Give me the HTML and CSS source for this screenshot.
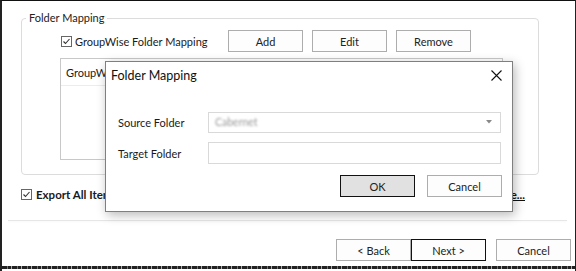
FILE: index.html
```html
<!DOCTYPE html>
<html>
<head>
<meta charset="utf-8">
<link rel="stylesheet" href="styles.css">
</head>
<body>
<div class="frame">
  <fieldset class="group">
    <legend>Folder Mapping</legend>
    <div class="row1">
      <label class="chk">
        <svg class="box" width="11" height="11" viewBox="0 0 11 11"><rect x="0.5" y="0.5" width="10" height="10" fill="#fff" stroke="#666"/><polyline points="2.5,5.5 4.5,7.5 8.5,3" fill="none" stroke="#333" stroke-width="1.1"/></svg>
        <span>GroupWise Folder Mapping</span>
      </label>
      <div class="btns">
        <button class="btn">Add</button>
        <button class="btn">Edit</button>
        <button class="btn">Remove</button>
      </div>
    </div>
    <div class="listbox">
      <div class="lhead"><span class="col1">GroupW</span><span class="col2"></span></div>
    </div>
  </fieldset>

  <div class="export">
    <label class="chk bold">
      <svg class="box" width="11" height="11" viewBox="0 0 11 11"><rect x="0.5" y="0.5" width="10" height="10" fill="#fff" stroke="#666"/><polyline points="2.5,5.5 4.5,7.5 8.5,3" fill="none" stroke="#333" stroke-width="1.1"/></svg>
      <span>Export All Items</span>
    </label>
    <a class="link">More...</a>
  </div>

  <div class="sep"></div>

  <div class="nav">
    <button class="btn">&lt; Back</button>
    <button class="btn def">Next &gt;</button>
    <button class="btn gap">Cancel</button>
  </div>

  <div class="cut"></div>

  <div class="dialog">
    <div class="dtitle">
      <span>Folder Mapping</span>
      <svg class="close" width="11" height="11" viewBox="0 0 11 11"><path d="M0.5 0.5 L10.5 10.5 M10.5 0.5 L0.5 10.5" stroke="#111" stroke-width="1.1"/></svg>
    </div>
    <div class="dform">
      <span class="lbl">Source Folder</span>
      <div class="combo"><span class="blur">Cabernet</span><svg class="arrow" width="6" height="4" viewBox="0 0 6 4"><polygon points="0,0 6,0 3,3.5" fill="#888"/></svg></div>
      <span class="lbl">Target Folder</span>
      <div class="field"></div>
    </div>
    <div class="dbtns">
      <button class="btn ok">OK</button>
      <button class="btn">Cancel</button>
    </div>
  </div>
</div>
</body>
</html>
```
FILE: styles.css
```css
* { box-sizing: border-box; }
html, body { margin: 0; padding: 0; background: #fff; }
body { font-family: Lato, "Noto Sans", sans-serif; font-size: 11px; color: #1a1a1a; }

.frame {
  position: relative;
  width: 576px;
  height: 271px;
  border-top: 1px solid #111;
  border-left: 2px solid #222;
  border-right: 1px solid #222;
  background: #fff;
  overflow: hidden;
  display: flex;
  flex-direction: column;
}

.group {
  margin: 9px 0 0 19px;
  width: 518px;
  height: 165px;
  flex: none;
  border: 1px solid #dcdcdc;
  border-radius: 4px;
  padding: 4px 0 0 0;
}
.group legend {
  margin-left: 4px;
  padding: 0 3px;
  font-size: 11px;
  line-height: 16px;
  color: #222;
}

.row1 { display: flex; align-items: center; height: 22px; margin-left: 38px; }
.chk { display: flex; align-items: center; gap: 3px; font-size: 11px; }
.chk .box { flex: none; }
.row1 .chk { margin-left: 1px; width: 167px; }
.btns { display: flex; gap: 9px; }

.btn {
  flex: none;
  width: 75px;
  height: 22px;
  background: #fdfdfd;
  border: 1px solid #adadad;
  font-family: inherit;
  font-size: 11px;
  color: #222;
  padding: 0;
}

.listbox {
  margin: 6px 0 0 38px;
  width: 443px;
  height: 102px;
  border: 1px solid #c8c8c8;
}
.lhead {
  display: flex;
  height: 27px;
  align-items: center;
  border-bottom: 1px solid #ececec;
  font-size: 11px;
}
.col1 { padding-left: 5px; width: 330px; border-right: 1px solid #e5e5e5; }
.col2 { padding-left: 6px; }

.export {
  display: flex;
  align-items: center;
  justify-content: space-between;
  margin: 13px 0 0 19px;
  width: 504px;
  height: 12px;
  flex: none;
}
.bold { font-weight: bold; gap: 4px; font-size: 11.5px; }
.link { font-size: 11.5px; text-decoration: underline; color: #111; font-weight: bold; }

.sep {
  flex: none;
  margin: 20px 8px 0 6px;
  height: 1px;
  background: #e6e6e6;
  box-shadow: 0 1px 2px rgba(0,0,0,0.04);
}

.nav {
  flex: none;
  display: flex;
  justify-content: flex-end;
  margin: 18px 4px 0 0;
}
.nav .def { border: 1.5px solid #111; }
.nav .gap { margin-left: 10px; }

.cut {
  flex: none;
  margin-top: 5px;
  height: 3px;
  background: repeating-linear-gradient(90deg, #222 0 5px, #777 5px 6px, #222 6px 9px, #aaa 9px 10px);
}

.dialog {
  position: absolute;
  left: 103px;
  top: 60px;
  width: 408px;
  height: 151px;
  background: #fff;
  border: 1px solid #7f7f7f;
  box-shadow: 2px 3px 10px rgba(0,0,0,0.28);
}
.dtitle {
  display: flex;
  justify-content: space-between;
  align-items: center;
  height: 26px;
  padding: 0 10px 0 5px;
  font-size: 12.5px;
  color: #111;
}
.dform {
  display: grid;
  grid-template-columns: 90px 293px;
  grid-auto-rows: 22px;
  row-gap: 9px;
  align-items: center;
  margin: 23px 0 0 12px;
}
.lbl { font-size: 11px; }
.combo {
  height: 21px;
  border: 1px solid #d9d9d9;
  display: flex;
  align-items: center;
  justify-content: space-between;
  padding: 0 8px 0 6px;
}
.blur { color: #999; filter: blur(1.3px); font-size: 10.5px; }
.field { height: 22px; border: 1px solid #d9d9d9; }
.dbtns {
  display: flex;
  justify-content: flex-end;
  gap: 12px;
  margin: 11px 10px 0 0;
}
.dbtns .ok { background: #e1e1e1; border: 1.5px solid #111; }
```
